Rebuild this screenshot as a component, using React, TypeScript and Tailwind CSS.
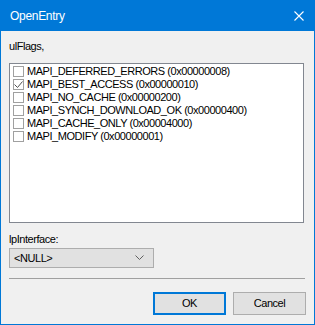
import React, { useState } from 'react';

const flags = [
  { name: 'MAPI_DEFERRED_ERRORS (0x00000008)', checked: false },
  { name: 'MAPI_BEST_ACCESS (0x00000010)', checked: true },
  { name: 'MAPI_NO_CACHE (0x00000200)', checked: false },
  { name: 'MAPI_SYNCH_DOWNLOAD_OK (0x00000400)', checked: false },
  { name: 'MAPI_CACHE_ONLY (0x00004000)', checked: false },
  { name: 'MAPI_MODIFY (0x00000001)', checked: false },
];

function CheckRow({ label, checked, onToggle }: { label: string; checked: boolean; onToggle: () => void }) {
  return (
    <div className="flex items-center h-[13px] cursor-default" onClick={onToggle}>
      <div className="w-[11px] h-[11px] border border-[#a0a0a0] bg-white flex items-center justify-center shrink-0">
        {checked && (
          <svg width="9" height="9" viewBox="0 0 9 9">
            <path d="M0.5 4.5 L3.5 7.5 L8.5 1.5" fill="none" stroke="#505050" strokeWidth="1" />
          </svg>
        )}
      </div>
      <span className="ml-[3px] leading-[13px] text-black whitespace-nowrap">{label}</span>
    </div>
  );
}

export default function App() {
  const [checks, setChecks] = useState(flags.map((f) => f.checked));

  const toggle = (i: number) => {
    const next = [...checks];
    next[i] = !next[i];
    setChecks(next);
  };

  return (
    <div
      className="w-[315px] h-[325px] flex flex-col bg-[#f0f0f0] border border-t-0 border-[#0078d7] text-[11px] tracking-[-0.45px] text-black"
      style={{ fontFamily: '"Liberation Sans", Arial, sans-serif' }}
    >
      {/* title bar */}
      <div className="h-[31px] -mx-px bg-[#0078d7] flex items-center justify-between pl-[10px] pr-[11px] shrink-0">
        <span className="text-white text-[12px] tracking-[-0.3px]">OpenEntry</span>
        <svg width="10" height="10" viewBox="0 0 10 10">
          <path d="M0.5 0.5 L9.5 9.5 M9.5 0.5 L0.5 9.5" stroke="white" strokeWidth="1.1" />
        </svg>
      </div>

      <div className="flex flex-col px-[8px]">
        <div className="mt-[9px] h-[13px] leading-[13px]">ulFlags,</div>

        <div className="mt-[10px] h-[160px] w-[295px] border border-[#828790] bg-white pl-[3px] pt-[1px]">
          {flags.map((f, i) => (
            <CheckRow key={f.name} label={f.name} checked={checks[i]} onToggle={() => toggle(i)} />
          ))}
        </div>

        <div className="mt-[10px] h-[13px] leading-[13px]">lpInterface:</div>

        <div className="mt-[2px] w-[145px] h-[20px] border border-[#adadad] bg-[#e1e1e1] flex items-center justify-between pl-[4px] pr-[9px]">
          <span>&lt;NULL&gt;</span>
          <svg width="9" height="6" viewBox="0 0 9 6">
            <path d="M0.5 0.5 L4.5 4.5 L8.5 0.5" fill="none" stroke="#606060" strokeWidth="1" />
          </svg>
        </div>

        <div className="mt-[10px] h-px w-[296px] bg-[#a0a0a0]" />

        <div className="mt-[13px] flex justify-end gap-[7px] w-[297px]">
          <button className="w-[73px] h-[23px] border-2 border-[#0078d7] bg-[#e1e1e1] text-black text-[11px]">
            OK
          </button>
          <button className="w-[73px] h-[23px] border border-[#adadad] bg-[#e1e1e1] text-black text-[11px]">
            Cancel
          </button>
        </div>
      </div>
    </div>
  );
}
